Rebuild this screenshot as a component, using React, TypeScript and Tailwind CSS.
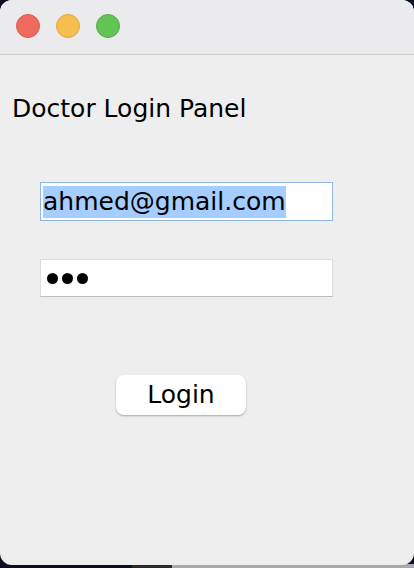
export default function App() {
  return (
    <div className="relative h-[568px] w-[414px] overflow-hidden bg-[#0b1020]">
      {/* 背景の下端 */}
      <div className="absolute bottom-0 left-[132px] h-[4px] w-[40px] bg-[#2a2a2a]" />
      <div className="absolute bottom-0 left-[172px] h-[4px] w-[242px] bg-[#a9a9a9]" />

      {/* ウィンドウ */}
      <div
        className="relative flex h-[565px] w-[414px] flex-col overflow-hidden rounded-[12px] bg-[#eeeeee] text-black"
        style={{ fontFamily: '"DejaVu Sans", "Liberation Sans", sans-serif' }}
      >
        {/* タイトルバー */}
        <div className="flex h-[55px] shrink-0 items-center gap-[16px] border-b border-[#d0d0d0] bg-[#ebebed] pl-[16px] pb-[2px]">
          <span className="h-[24px] w-[24px] rounded-full border border-[#dc5b50] bg-[#ee6a5f]" />
          <span className="h-[24px] w-[24px] rounded-full border border-[#dfa63c] bg-[#f5be4f]" />
          <span className="h-[24px] w-[24px] rounded-full border border-[#52ad46] bg-[#61c454]" />
        </div>

        {/* 本体 */}
        <div className="flex flex-col">
          <h1 className="mt-[39px] pl-[12px] text-[25px] leading-[30px]">Doctor Login Panel</h1>

          <div className="mt-[58px] ml-[40px] flex h-[39px] w-[293px] items-center border border-[#8fb6e8] bg-white px-[2px]">
            <span className="bg-[#a5cdff] text-[25px] leading-[32px]">ahmed@gmail.com</span>
          </div>

          <div className="mt-[38px] ml-[40px] flex h-[38px] w-[293px] items-center gap-[4px] border border-[#dcdcdc] border-b-[#bdbdbd] bg-white pl-[6px]">
            <span className="h-[11px] w-[11px] rounded-full bg-black" />
            <span className="h-[11px] w-[11px] rounded-full bg-black" />
            <span className="h-[11px] w-[11px] rounded-full bg-black" />
          </div>

          <div className="mt-[78px] flex">
            <button
              type="button"
              className="ml-[116px] h-[40px] w-[130px] rounded-[8px] bg-white text-[25px] leading-[30px] shadow-[0_1px_2px_rgba(0,0,0,0.3)]"
            >
              Login
            </button>
          </div>
        </div>
      </div>
    </div>
  );
}
